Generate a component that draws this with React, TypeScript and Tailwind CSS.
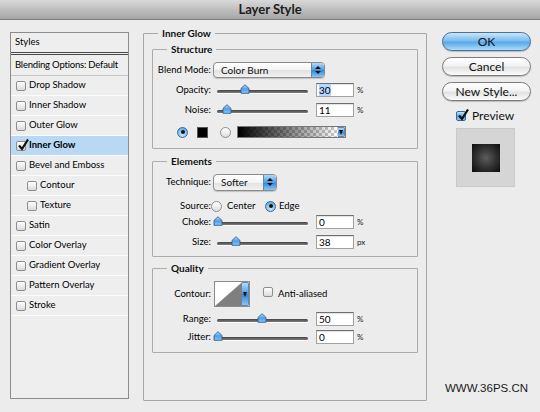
import React from "react";

const UI = "font-[Lato,'DejaVu_Sans',sans-serif]";

function Check({ on = false, blue = false }: { on?: boolean; blue?: boolean }) {
  return (
    <span
      className={`relative inline-block h-[10px] w-[10px] shrink-0 rounded-[2px] border ${
        blue
          ? "border-[#35689f] bg-[linear-gradient(#c4e5fc,#5aa5e6_55%,#8ccaf6)]"
          : "border-[#8d8d8d] bg-[linear-gradient(#ffffff,#dadada)]"
      }`}
    >
      {on && (
        <svg viewBox="0 0 12 12" className="absolute left-[0px] top-[-3px] h-[12px] w-[12px]">
          <path d="M2 6.5 L5 10 L11 0.5" fill="none" stroke="#111" strokeWidth="2.2" />
        </svg>
      )}
    </span>
  );
}

function Radio({ on = false }: { on?: boolean }) {
  return (
    <span
      className={`flex h-[11px] w-[11px] shrink-0 items-center justify-center rounded-full border ${
        on
          ? "border-[#35689f] bg-[radial-gradient(circle_at_50%_75%,#c6e8ff,#4f9ee3)]"
          : "border-[#8e8e8e] bg-[linear-gradient(#ffffff,#dedede)]"
      }`}
    >
      {on && <span className="h-[4px] w-[4px] rounded-full bg-[#111]" />}
    </span>
  );
}

function Slider({ at }: { at: number }) {
  return (
    <div className="relative ml-[6px] h-[12px] w-[91px] shrink-0">
      <div className="mt-[6px] h-[3px] rounded-full bg-[linear-gradient(#444444,#7e7e7e)] shadow-[0_1px_0_#fbfbfb]" />
      <svg viewBox="0 0 10 10" className="absolute top-[0px] h-[10px] w-[10px]" style={{ left: at - 5 }}>
        <defs>
          <linearGradient id="thumbFill" x1="0" y1="0" x2="0" y2="1">
            <stop offset="0" stopColor="#c2e3fb" />
            <stop offset="0.5" stopColor="#4f9de2" />
            <stop offset="1" stopColor="#8cc9f5" />
          </linearGradient>
        </defs>
        <path d="M1 4.5 L5 0.7 L9 4.5 V9.3 H1 Z" fill="url(#thumbFill)" stroke="#2f5f94" strokeWidth="0.9" />
      </svg>
    </div>
  );
}

function Num({ v, sel = false }: { v: string; sel?: boolean }) {
  return (
    <div className="ml-[8px] h-[14px] w-[38px] shrink-0 border border-[#a2a2a2] border-t-[#6f6f6f] bg-white pl-[2px] text-[10px] leading-[12px] text-black shadow-[inset_0_1px_1px_rgba(0,0,0,0.12)]">
      <span className={sel ? "bg-[#b4d5fe]" : ""}>{v}</span>
    </div>
  );
}

function Stepper() {
  return (
    <span className="flex h-full w-[13px] flex-col items-center justify-center gap-[2px] border-l border-[#5f86b3] bg-[linear-gradient(#b2daf8,#4d9be0_50%,#2f86d8_51%,#86c6f4)]">
      <svg viewBox="0 0 6 3" className="h-[3px] w-[6px]">
        <path d="M0 3 L3 0 L6 3 Z" fill="#111" />
      </svg>
      <svg viewBox="0 0 6 3" className="h-[3px] w-[6px]">
        <path d="M0 0 L3 3 L6 0 Z" fill="#111" />
      </svg>
    </span>
  );
}

function Select({ text, w, h }: { text: string; w: string; h: string }) {
  return (
    <div
      className={`ml-[2px] flex ${w} ${h} shrink-0 items-center overflow-hidden rounded-[4px] border border-[#8a8a8a] bg-[linear-gradient(#ffffff,#f4f4f4_50%,#e2e2e2_52%,#f2f2f2)] shadow-[0_1px_1px_rgba(0,0,0,0.18)]`}
    >
      <span className="flex-1 pl-[7px] text-[10px] text-[#111]">{text}</span>
      <Stepper />
    </div>
  );
}

function DropTab() {
  return (
    <span className="flex h-full w-[7px] items-center justify-center rounded-r-[2px] border border-l-0 border-[#5f86b3] bg-[linear-gradient(#b2daf8,#4d9be0_50%,#2f86d8_51%,#86c6f4)]">
      <svg viewBox="0 0 4 5" className="h-[5px] w-[4px]">
        <path d="M0 0 H4 L2 5 Z" fill="#111" />
      </svg>
    </span>
  );
}

function Label({ children }: { children: React.ReactNode }) {
  return <span className="w-[58px] shrink-0 whitespace-nowrap text-right text-[9.5px] text-black">{children}</span>;
}

function SliderRow({ label, at, v, unit, sel = false, h = "h-[16px]" }: { label: string; at: number; v: string; unit: string; sel?: boolean; h?: string }) {
  return (
    <div className={`flex ${h} items-center`}>
      <Label>{label}</Label>
      <Slider at={at} />
      <Num v={v} sel={sel} />
      <span className="ml-[3px] text-[8px] text-[#222]">{unit}</span>
    </div>
  );
}

function Group({ title, className, children }: { title: string; className: string; children: React.ReactNode }) {
  return (
    <fieldset className={`rounded-[1px] border border-[#ababab] ${className}`}>
      <legend className="ml-[14px] px-[4px] text-[10px] font-bold leading-[12px] text-[#111]">{title}</legend>
      {children}
    </fieldset>
  );
}

const styles: { name: string; indent?: boolean; on?: boolean }[] = [
  { name: "Drop Shadow" },
  { name: "Inner Shadow" },
  { name: "Outer Glow" },
  { name: "Inner Glow", on: true },
  { name: "Bevel and Emboss" },
  { name: "Contour", indent: true },
  { name: "Texture", indent: true },
  { name: "Satin" },
  { name: "Color Overlay" },
  { name: "Gradient Overlay" },
  { name: "Pattern Overlay" },
  { name: "Stroke" },
];

function StyleList() {
  return (
    <div className="ml-[10px] mt-[12px] flex h-[367px] w-[119px] shrink-0 flex-col border border-[#8c8c8c] bg-[#eeeeee]">
      <div className="flex h-[22px] shrink-0 items-center border-b-[3px] border-double border-[#4a4a4a] pl-[4px] text-[9.5px] text-black">
        Styles
      </div>
      <div className="flex h-[21px] shrink-0 items-center whitespace-nowrap border-b border-[#c4c4c4] pl-[4px] text-[9.5px] tracking-[-0.2px] text-black">
        Blending Options: Default
      </div>
      {styles.map((s) => (
        <div
          key={s.name}
          className={`flex h-[20px] shrink-0 items-center gap-[3px] whitespace-nowrap border-b border-[#fbfbfb] ${s.indent ? "pl-[16px]" : "pl-[5px]"} ${
            s.on ? "bg-[#b9d8f3] font-bold" : ""
          } text-[9.5px] text-black`}
        >
          <Check on={s.on} />
          <span>{s.name}</span>
        </div>
      ))}
    </div>
  );
}

function AquaButton({ text, primary = false }: { text: string; primary?: boolean }) {
  return (
    <div
      className={`flex h-[19px] w-[89px] items-center justify-center rounded-full border text-[12px] text-[#111] shadow-[0_1px_1px_rgba(0,0,0,0.2)] ${
        primary
          ? "border-[#4d6f95] bg-[linear-gradient(#c9e7fb,#7cbdf0_45%,#5aa8ea_55%,#a8dcfc)]"
          : "border-[#7b7b7b] bg-[linear-gradient(#ffffff,#f3f3f3_45%,#e2e2e2_55%,#fbfbfb)]"
      }`}
    >
      {text}
    </div>
  );
}

export default function App() {
  return (
    <div className={`h-[412px] w-[540px] overflow-hidden bg-[#ececec] ${UI}`}>
      <div className="flex h-[20px] items-center justify-center border-b border-[#7c7c7c] bg-[linear-gradient(#d9d9d9,#b9b9b9_60%,#a7a7a7)] text-[13px] font-bold text-[#1c1c1c]">
        Layer Style
      </div>
      <div className="flex h-[392px]">
        <StyleList />

        <fieldset className="ml-[14px] mt-[7px] h-[374px] w-[284px] shrink-0 rounded-[1px] border border-[#a6a6a6] px-[8px]">
          <legend className="ml-[6px] px-[4px] text-[10px] font-bold leading-[12px] text-[#111]">Inner Glow</legend>

          <Group title="Structure" className="mt-[4px] pb-[6px] pt-[5px]">
            <div className="flex h-[20px] items-center">
              <Label>Blend Mode:</Label>
              <Select text="Color Burn" w="w-[112px]" h="h-[16px]" />
            </div>
            <SliderRow label="Opacity:" at={28} v="30" unit="%" sel h="h-[20px]" />
            <SliderRow label="Noise:" at={10} v="11" unit="%" h="h-[20px]" />
            <div className="mt-[2px] flex h-[20px] items-center">
              <span className="ml-[24px]">
                <Radio on />
              </span>
              <span className="ml-[9px] h-[11px] w-[11px] shrink-0 border border-[#555] bg-black" />
              <span className="ml-[12px]">
                <Radio />
              </span>
              <span className="ml-[6px] flex h-[12px] w-[109px] shrink-0 border border-[#777]">
                <span className="h-full flex-1 bg-[linear-gradient(to_right,#000,rgba(0,0,0,0)),repeating-conic-gradient(#c9c9c9_0%_25%,#ffffff_0%_50%)] bg-[length:100%_100%,6px_6px]" />
                <DropTab />
              </span>
            </div>
          </Group>

          <Group title="Elements" className="mt-[6px] pb-[6px] pt-[5px]">
            <div className="flex h-[20px] items-center">
              <Label>Technique:</Label>
              <Select text="Softer" w="w-[64px]" h="h-[17px]" />
            </div>
            <div className="mt-[6px] flex h-[16px] items-center text-[9.5px] text-black">
              <Label>Source:</Label>
              <Radio />
              <span className="ml-[5px] w-[38px] shrink-0">Center</span>
              <Radio on />
              <span className="ml-[3px]">Edge</span>
            </div>
            <SliderRow label="Choke:" at={1} v="0" unit="%" />
            <div className="mt-[4px]">
              <SliderRow label="Size:" at={19} v="38" unit="px" />
            </div>
          </Group>

          <Group title="Quality" className="mt-[5px] pb-[7px] pt-[7px]">
            <div className="flex h-[26px] items-center text-[9.5px] text-black">
              <Label>Contour:</Label>
              <span className="ml-[3px] flex h-[26px] w-[36px] shrink-0 border border-[#8c8c8c]">
                <svg viewBox="0 0 28 24" preserveAspectRatio="none" className="h-full w-[28px] bg-white">
                  <path d="M0 24 L28 0 V24 Z" fill="#7f7f7f" />
                </svg>
                <DropTab />
              </span>
              <span className="ml-[13px]">
                <Check />
              </span>
              <span className="ml-[5px]">Anti-aliased</span>
            </div>
            <div className="mt-[4px]">
              <SliderRow label="Range:" at={45} v="50" unit="%" />
            </div>
            <div className="mt-[2px]">
              <SliderRow label="Jitter:" at={1} v="0" unit="%" />
            </div>
          </Group>
        </fieldset>

        <div className="ml-[15px] flex h-[392px] w-[89px] shrink-0 flex-col">
          <div className="mt-[12px] flex flex-col gap-[6px]">
            <AquaButton text="OK" primary />
            <AquaButton text="Cancel" />
            <AquaButton text="New Style..." />
          </div>
          <div className="ml-[14px] mt-[9px] flex h-[11px] items-center gap-[6px]">
            <Check on blue />
            <span className="text-[12px] text-[#111]">Preview</span>
          </div>
          <div className="ml-[14px] mt-[7px] flex h-[59px] w-[59px] items-center justify-center border border-[#c9c9c9] bg-[#d5d5d5]">
            <div className="h-[28px] w-[28px] bg-[radial-gradient(circle,#5c5c5c_0%,#2e2e2e_55%,#0b0b0b_100%)]" />
          </div>
          <div className="mt-auto pb-[15px] text-center font-['Liberation_Sans',Arial,sans-serif] text-[11.5px] text-[#1a1a1a]">
            WWW.36PS.CN
          </div>
        </div>
      </div>
    </div>
  );
}
